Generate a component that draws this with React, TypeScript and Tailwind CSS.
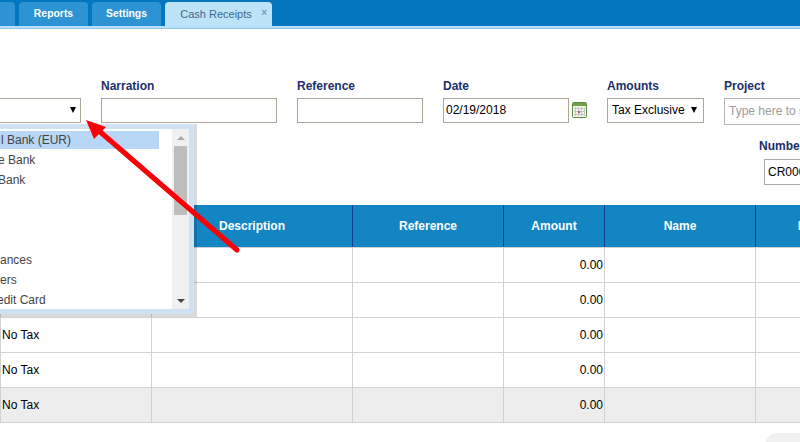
const font = { fontFamily: '"Liberation Sans", Arial, sans-serif' };

function Label({ children }: { children: string }) {
  return <div className="h-[14px] pt-px text-[12px] leading-[13px] font-bold text-[#1b2f6b] whitespace-nowrap">{children}</div>;
}

function Tab({ label, w, active }: { label: string; w: string; active?: boolean }) {
  return (
    <div className={`${w} ${active ? "bg-[#bde3f9] text-[#3d6a8c] font-normal text-[11px]" : "bg-[#2e93d3] text-white font-bold text-[10.4px]"} relative h-6 shrink-0 rounded-t-[4px] flex items-center justify-center`}>
      {active ? <span className="pr-[5px]">{label}</span> : label}
      {active && <span className="absolute right-[5px] top-[5px] text-[10px] leading-[11px] font-bold text-[#6b9dc0]">×</span>}
    </div>
  );
}

function CalendarIcon() {
  return (
    <svg width="16" height="17" viewBox="0 0 16 17" className="shrink-0">
      <rect x="0.5" y="0.5" width="14" height="15" rx="1" fill="#f4f4f0" stroke="#5c8a3c" />
      <rect x="1" y="1" width="13" height="3" fill="#6f9f4a" />
      <g stroke="#c4c4c4" strokeWidth="1">
        <path d="M3.5 5v9M6.5 5v9M9.5 5v9M12.5 5v9M2 6.5h11M2 9.5h11M2 12.5h11" />
      </g>
      <rect x="6" y="9" width="2" height="2" fill="#b06060" />
    </svg>
  );
}

function Caret() {
  return <div className="w-0 h-0 border-x-[3.5px] border-x-transparent border-t-[6px] border-t-black" />;
}

const inputCls = "h-[25px] border border-[#aca899] bg-white text-[12px] text-black flex items-center pb-px";

const cols = ["w-[152px]", "w-[201px]", "w-[151px]", "w-[101px]", "w-[151px]", "w-[151px]"];
const headers = ["", "Description", "Reference", "Amount", "Name", "Department"];

function Row({ tax, gray }: { tax?: string; gray?: boolean }) {
  return (
    <div className={`flex h-[35px] border-b border-l border-[#d2d2d2] ${gray ? "bg-[#ededed]" : "bg-white"}`}>
      {cols.map((c, i) => (
        <div key={i} className={`${i === 0 ? "w-[151px]" : c} shrink-0 border-r border-[#d2d2d2] flex items-center text-[12px] text-black ${i === 3 ? "justify-end pr-px" : "pl-px"}`}>
          {i === 0 && tax}
          {i === 3 && "0.00"}
        </div>
      ))}
    </div>
  );
}

const options = [
  { t: "l Bank (EUR)", c: "pl-px" },
  { t: "e Bank", c: "-ml-[2px]" },
  { t: "Bank", c: "-ml-[2px]" },
  { t: "", c: "" },
  { t: "", c: "" },
  { t: "", c: "" },
  { t: "ances", c: "" },
  { t: "ers", c: "" },
  { t: "edit Card", c: "-ml-[3px]" },
];

export default function App() {
  return (
    <div className="relative w-[800px] h-[442px] overflow-hidden bg-white" style={font}>
      <div className="h-[29px] bg-[#0277bf] flex flex-col">
        <div className="h-[26px] pt-0.5 flex gap-1 pl-0 -ml-[54px]">
          <Tab label="" w="w-[69px]" />
          <Tab label="Reports" w="w-[69px]" />
          <Tab label="Settings" w="w-[69px]" />
          <Tab label="Cash Receipts" w="w-[107px]" active />
        </div>
        <div className="h-[3px] bg-[#b9e0f8] border-b border-[#8fc6ee]" />
      </div>

      <div className="flex pt-[50px] gap-5 h-[96px]">
        <div className="w-[81px] shrink-0 pt-[19px]">
          <div className={`${inputCls} justify-end pr-1 border-l-0`}><Caret /></div>
        </div>
        <div className="w-[176px] shrink-0">
          <Label>Narration</Label>
          <div className="h-[5px]" />
          <div className={inputCls} />
        </div>
        <div className="w-[126px] shrink-0">
          <Label>Reference</Label>
          <div className="h-[5px]" />
          <div className={inputCls} />
        </div>
        <div className="w-[144px] shrink-0">
          <Label>Date</Label>
          <div className="h-[5px]" />
          <div className="flex items-center gap-[3px]">
            <div className={`${inputCls} w-[126px] pl-[2px] shrink-0`}>02/19/2018</div>
            <CalendarIcon />
          </div>
        </div>
        <div className="w-[97px] shrink-0">
          <Label>Amounts</Label>
          <div className="h-[5px]" />
          <div className={`${inputCls} justify-between pl-1 pr-[6px]`}>
            <span>Tax Exclusive</span>
            <Caret />
          </div>
        </div>
        <div className="w-[120px] shrink-0">
          <Label>Project</Label>
          <div className="h-[5px]" />
          <div className="h-[27px] border border-[#b5b5b5] bg-white text-[12px] text-[#9b9b9b] flex items-center pl-1 pb-px whitespace-nowrap overflow-hidden">Type here to search</div>
        </div>
      </div>

      <div className="pl-[759px] h-[80px]">
        <div className="pt-[14px]">
          <Label>Number</Label>
        </div>
        <div className="h-[6px]" />
        <div className="ml-[5px] h-[26px] w-[80px] border border-[#a9a9a9] text-[12px] text-black flex items-center pl-[3px]">CR0000</div>
      </div>

      <div className="w-[907px]">
        <div className="flex h-[42px] bg-[#1385c3]">
          {cols.map((c, i) => (
            <div key={i} className={`${c} shrink-0 border-r border-[#123f8f] flex items-center justify-center text-[12px] font-bold text-white`}>
              {headers[i]}
            </div>
          ))}
        </div>
        <div className="h-px bg-[#d2d2d2]" />
        <Row />
        <Row />
        <Row tax="No Tax" />
        <Row tax="No Tax" />
        <Row tax="No Tax" gray />
      </div>

      <div className="absolute left-[766px] top-[433px] w-[60px] h-[30px] rounded-t-[10px] bg-[#f0f0f0]" />

      {/* open dropdown */}
      <div className="absolute left-0 top-[124px] w-[197px] h-[193px] bg-black/15 pr-[3px] pb-[3px]">
        <div className="w-full h-full bg-[#cfe2f5] pt-[5px] pb-[5px] pr-[5px] flex">
          <div className="flex-1 bg-white flex flex-col pr-[13px] overflow-hidden">
            {options.map((o, i) => (
              <div key={i} className="h-5 pt-[2px]">
                <div className={`w-full h-[18px] flex items-center text-[12px] text-[#444] whitespace-nowrap ${i === 0 ? "bg-[#b8d6f5]" : ""} ${o.c}`}>
                  {o.t}
                </div>
              </div>
            ))}
          </div>
          <div className="w-[17px] bg-[#f0f0f0] flex flex-col">
            <div className="w-full h-[17px] flex items-center justify-center">
              <div className="w-0 h-0 border-x-[4px] border-x-transparent border-b-[4px] border-b-[#aaa]" />
            </div>
            <div className="ml-[2px] w-[13px] h-[69px] bg-[#bdbdbd]" />
            <div className="flex-1" />
            <div className="w-full h-[17px] flex items-center justify-center">
              <div className="w-0 h-0 border-x-[4px] border-x-transparent border-t-[4px] border-t-[#444]" />
            </div>
          </div>
        </div>
      </div>

      {/* annotation arrow */}
      <svg className="absolute left-0 top-0 pointer-events-none" width="800" height="442" viewBox="0 0 800 442">
        <path d="M237 250L98 130" stroke="#fb0007" strokeWidth="5" strokeLinecap="round" />
        <path d="M86 120L106 127L94 139Z" fill="#fb0007" />
      </svg>
    </div>
  );
}
